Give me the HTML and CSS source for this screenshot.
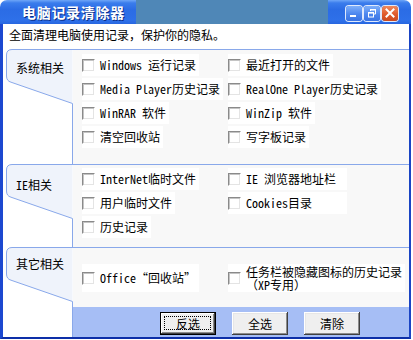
FILE: index.html
```html
<!DOCTYPE html>
<html lang="zh">
<head>
<meta charset="utf-8">
<title>电脑记录清除器</title>
<link rel="stylesheet" href="styles.css">
</head>
<body>
<div class="window">
  <div class="titlebar">
    <span class="title">电脑记录清除器</span>
    <div class="redact"></div>
    <div class="controls">
      <span class="ctl blue"><svg width="16" height="15" viewBox="0 0 16 15"><rect x="4" y="9" width="6" height="2" fill="#fff"/></svg></span>
      <span class="ctl blue"><svg width="16" height="15" viewBox="0 0 16 15"><path d="M6.5 3.5h5v4.5h-1.5M6.5 3.5v1.5" fill="none" stroke="#fff" stroke-width="1"/><rect x="6" y="3" width="6" height="1.5" fill="#fff"/><rect x="4.5" y="6.5" width="5" height="4.5" fill="none" stroke="#fff"/><rect x="4" y="6" width="6" height="1.6" fill="#fff"/></svg></span>
      <span class="ctl red"><svg width="16" height="15" viewBox="0 0 16 15"><path d="M4.5 3.5l7 7M11.5 3.5l-7 7" stroke="#fff" stroke-width="2" stroke-linecap="square"/></svg></span>
    </div>
  </div>
  <div class="body">
    <div class="intro">全面清理电脑使用记录，保护你的隐私。</div>

    <section class="group g1">
      <div class="side">
        <div class="tab">
          <svg class="tab-shape" width="67" height="56" viewBox="0 0 67 56"><path class="fill" d="M66.5 0.5H6Q0.5 0.5 0.5 6V27Q0.5 32 5 33.2L66.5 54.5Z"/><path class="edge" d="M67 0.5H6Q0.5 0.5 0.5 6V27Q0.5 32 5 33.2L66.5 54.5V56"/></svg>
          <span class="tab-label">系统相关</span>
        </div>
        <div class="rail"></div>
      </div>
      <div class="content">
        <label class="item"><span class="cb"></span>Windows 运行记录</label>
        <label class="item"><span class="cb"></span>最近打开的文件</label>
        <label class="item"><span class="cb"></span>Media Player历史记录</label>
        <label class="item"><span class="cb"></span>RealOne Player历史记录</label>
        <label class="item"><span class="cb"></span>WinRAR 软件</label>
        <label class="item"><span class="cb"></span>WinZip 软件</label>
        <label class="item"><span class="cb"></span>清空回收站</label>
        <label class="item"><span class="cb"></span>写字板记录</label>
      </div>
    </section>

    <section class="group g2">
      <div class="side">
        <div class="tab">
          <svg class="tab-shape" width="67" height="56" viewBox="0 0 67 56"><path class="fill" d="M66.5 0.5H6Q0.5 0.5 0.5 6V27Q0.5 32 5 33.2L66.5 54.5Z"/><path class="edge" d="M67 0.5H6Q0.5 0.5 0.5 6V27Q0.5 32 5 33.2L66.5 54.5V56"/></svg>
          <span class="tab-label">IE相关</span>
        </div>
        <div class="rail"></div>
      </div>
      <div class="content">
        <label class="item"><span class="cb"></span>InterNet临时文件</label>
        <label class="item w2"><span class="cb"></span>IE 浏览器地址栏</label>
        <label class="item"><span class="cb"></span>用户临时文件</label>
        <label class="item w2"><span class="cb"></span>Cookies目录</label>
        <label class="item"><span class="cb"></span>历史记录</label>
      </div>
    </section>

    <section class="group g3">
      <div class="side">
        <div class="tab">
          <svg class="tab-shape" width="67" height="56" viewBox="0 0 67 56"><path class="fill" d="M66.5 0.5H6Q0.5 0.5 0.5 6V27Q0.5 32 5 33.2L66.5 54.5Z"/><path class="edge" d="M67 0.5H6Q0.5 0.5 0.5 6V27Q0.5 32 5 33.2L66.5 54.5V56"/></svg>
          <span class="tab-label">其它相关</span>
        </div>
        <div class="rail"></div>
      </div>
      <div class="content">
        <label class="item"><span class="cb"></span>Office“回收站”</label>
        <label class="item"><span class="cb"></span><span class="two"><span class="ln">任务栏被隐藏图标的历史记录</span><span class="ln">（XP专用）</span></span></label>
      </div>
      <div class="bar">
        <button class="btn focus">反选</button>
        <button class="btn">全选</button>
        <button class="btn">清除</button>
      </div>
    </section>
  </div>
</div>
</body>
</html>
```
FILE: styles.css
```css
html, body {
  margin: 0;
  padding: 0;
  background: #ffffff;
}
body {
  font-family: "Noto Sans Mono CJK SC", "Noto Sans CJK SC", monospace;
  font-size: 12px;
  color: #000;
}
.window {
  width: 411px;
  height: 339px;
  display: flex;
  flex-direction: column;
}
.titlebar {
  position: relative;
  height: 24px;
  flex: none;
  display: flex;
  align-items: flex-start;
  border-radius: 7px 7px 0 0;
  background: linear-gradient(to bottom, #6ea6f7 0px, #3a7cec 3px, #2b6ce5 40%, #2e70e9 85%, #2766e0 100%);
}
.title {
  font-family: "Noto Sans CJK SC", sans-serif;
  font-weight: bold;
  font-size: 14px;
  line-height: 18px;
  letter-spacing: 0.7px;
  color: #fff;
  padding: 3px 0 0 22px;
  text-shadow: 1px 1px 0 #0c2f8a;
}
.redact {
  position: absolute;
  left: 136px;
  top: 0;
  width: 192px;
  height: 24px;
  background: #4f87b7;
}
.controls {
  margin-left: auto;
  margin-right: 13px;
  margin-top: 6px;
  display: flex;
  gap: 2px;
}
.ctl {
  width: 16px;
  height: 15px;
  box-sizing: border-box;
  border-radius: 3px;
  display: block;
  box-shadow: 0 0 0 1px rgba(255,255,255,0.85);
}
.ctl svg { display: block; }
.ctl.blue {
  background: linear-gradient(to bottom, #7fb0fa, #4c86ee 55%, #3a74e4);
}
.ctl.red {
  background: linear-gradient(to bottom, #f08a5d, #df5a2c 55%, #cc4a1e);
}
.body {
  flex: 1;
  display: flex;
  flex-direction: column;
  border-left: 3px solid #1c48d0;
  border-right: 2px solid #1a44c4;
  border-bottom: 2px solid #0d2fa8;
  background: #ffffff;
}
.intro {
  height: 25px;
  box-sizing: border-box;
  padding: 4px 0 0 6px;
  line-height: 14px;
  flex: none;
}
.group {
  display: grid;
  grid-template-columns: 67px 1fr;
  padding-left: 3px;
  flex: none;
}
.g1 { height: 115px; }
.g2 { height: 83px; }
.g3 {
  height: 90px;
  grid-template-rows: 60px 30px;
}
.side {
  display: flex;
  flex-direction: column;
}
.g3 .side { grid-row: 1 / 3; }
.tab {
  position: relative;
  width: 67px;
  height: 56px;
  flex: none;
}
.tab-shape {
  position: absolute;
  left: 0;
  top: 0;
  display: block;
}
.tab-shape .fill { fill: #eff3fb; stroke: none; }
.tab-shape .edge { fill: none; stroke: #89a8ea; stroke-width: 1; }
.tab-label {
  position: relative;
  display: block;
  padding-left: 10px;
  line-height: 14px;
}
.g1 .tab-label { padding-top: 12px; }
.g2 .tab-label { padding-top: 14px; }
.g3 .tab-label { padding-top: 10px; }
.rail {
  flex: 1;
  border-right: 1px solid #89a8ea;
}
.content {
  border-top: 1px solid #89a8ea;
  background: #f8f8f8;
  display: grid;
  grid-template-columns: 146px auto;
  grid-auto-rows: 24px;
  align-content: start;
  justify-items: start;
  padding: 3px 0 0 9px;
}
.g2 .content { padding-top: 2px; }
.g3 .content {
  grid-auto-rows: auto;
  align-content: center;
  align-items: center;
  padding-top: 0;
}
.item {
  display: flex;
  align-items: center;
  gap: 5px;
  height: 22px;
  margin-top: 1px;
  padding-right: 3px;
  background: #ffffff;
  white-space: nowrap;
  line-height: 14px;
}
.item.w2 { width: 116px; }
.cb {
  width: 13px;
  height: 13px;
  box-sizing: border-box;
  flex: none;
  background: #fff;
  border: 1px solid;
  border-color: #8a8a8a #ffffff #ffffff #8a8a8a;
  box-shadow: inset 1px 1px 0 #c4c4c4, inset -1px -1px 0 #e4e4e4;
}
.g3 .item { height: 28px; }
.two {
  display: flex;
  flex-direction: column;
}
.two .ln {
  display: block;
  height: 12px;
  line-height: 12px;
  overflow: visible;
}
.two .ln + .ln { margin-top: 1px; }
.bar {
  grid-column: 2;
  grid-row: 2;
  background: #a6bef5;
  display: flex;
  align-items: flex-start;
  gap: 16px;
  padding: 5px 0 0 87px;
}
.btn {
  width: 56px;
  height: 23px;
  box-sizing: border-box;
  font-family: "Noto Sans Mono CJK SC", "Noto Sans CJK SC", monospace;
  font-size: 12px;
  color: #000;
  background: #efefef;
  border: none;
  padding: 0;
  box-shadow: inset -1px -1px 0 #404040, inset 1px 1px 0 #ffffff, inset -2px -2px 0 #8c8c8c, inset 2px 2px 0 #e6e6e6;
  position: relative;
}
.btn.focus {
  border: 1px solid #000;
  box-shadow: inset -1px -1px 0 #404040, inset 1px 1px 0 #ffffff, inset -2px -2px 0 #8c8c8c;
}
.btn.focus::after {
  content: "";
  position: absolute;
  left: 3px;
  top: 3px;
  right: 4px;
  bottom: 4px;
  border: 1px dotted #000;
}
```
